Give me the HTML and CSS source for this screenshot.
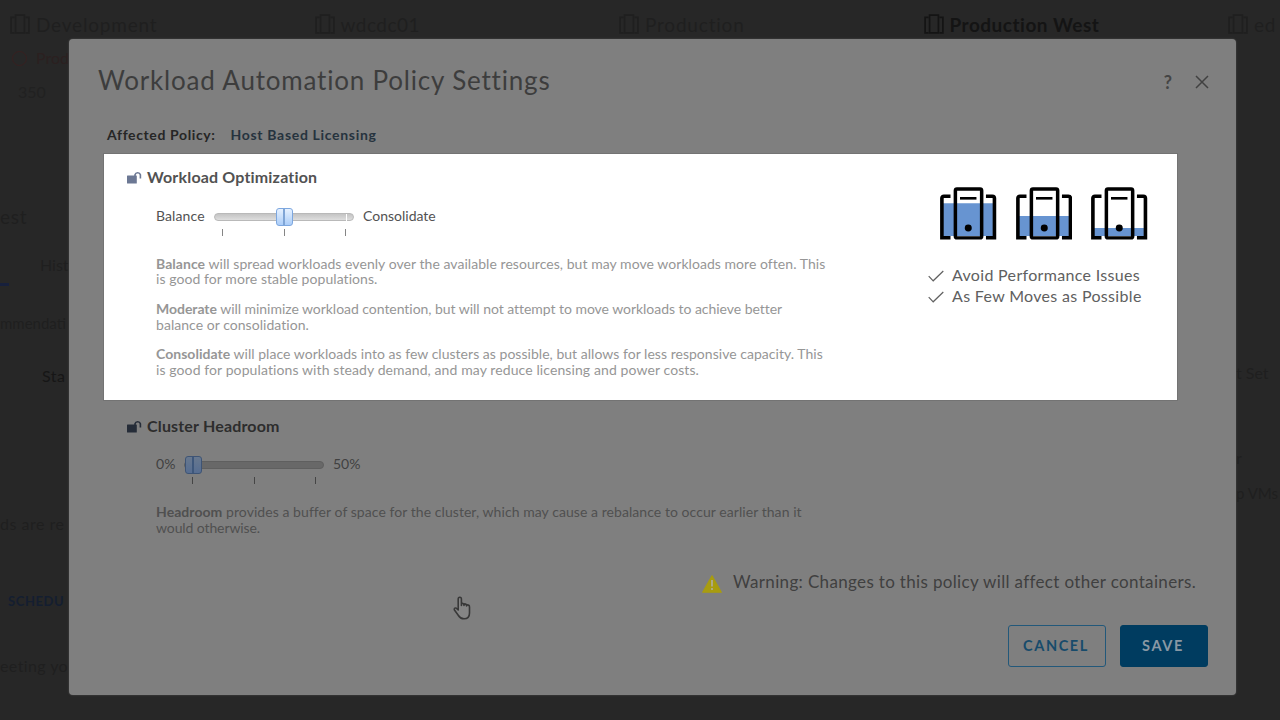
FILE: index.html
```html
<!DOCTYPE html>
<html lang="en">
<head>
<meta charset="utf-8">
<title>Workload Automation Policy Settings</title>
<link rel="stylesheet" href="styles.css">
</head>
<body>
<svg width="0" height="0" class="defs">
  <symbol id="server" viewBox="0 0 57 53">
    <path d="M10.5 9.2H4Q1.9 9.2 1.9 11.3V50.7H10.5M46 9.2H52.4Q54.5 9.2 54.5 11.3V50.7H46" fill="none" stroke="currentColor" stroke-width="3.6"/>
    <rect x="15.4" y="1.9" width="26.3" height="49" rx="1.6" fill="none" stroke="currentColor" stroke-width="3.5"/>
    <path d="M20 11.3H36.5" stroke="currentColor" stroke-width="2.6"/>
    <circle cx="28.3" cy="41" r="3.5" fill="currentColor"/>
  </symbol>
  <symbol id="unlock" viewBox="0 0 15 13">
    <rect x="0" y="4.6" width="9.8" height="8" rx=".5" fill="currentColor"/>
    <path d="M8 5.5V3.8A2.8 2.8 0 0 1 13.4 3.8V7.6" fill="none" stroke="currentColor" stroke-width="1.6"/>
  </symbol>
  <symbol id="check" viewBox="0 0 16 12">
    <path d="M.7 6.2L5.2 10.8L15.3 1" fill="none" stroke="currentColor" stroke-width="1.2"/>
  </symbol>
  <symbol id="cluster" viewBox="0 0 18 18">
    <path d="M4 3H1V17H4M14 3H17V17H14M5 1H13V17H5Z" fill="none" stroke="currentColor" stroke-width="1.5"/>
  </symbol>
</svg>

<div class="page">
  <div class="tabs">
    <div class="tab"><svg class="tab-icon"><use href="#cluster"/></svg><span>Development</span></div>
    <div class="tab"><svg class="tab-icon"><use href="#cluster"/></svg><span class="tight">wdcdc01</span></div>
    <div class="tab"><svg class="tab-icon"><use href="#cluster"/></svg><span>Production</span></div>
    <div class="tab active"><svg class="tab-icon"><use href="#cluster"/></svg><span>Production West</span></div>
    <div class="tab"><svg class="tab-icon"><use href="#cluster"/></svg><span>ed</span></div>
  </div>
  <div class="behind">
    <div class="side">
      <div class="row alert"><i class="ring"></i>Prod</div>
      <div class="row meta">350</div>
      <div class="row crumb">est</div>
      <div class="row history">Hist</div>
      <div class="marker"></div>
      <div class="row recommend">mmendati</div>
      <div class="row status">Sta</div>
      <div class="row loads">ds are re</div>
      <div class="row schedule">SCHEDU</div>
      <div class="row meeting">eeting yo</div>
    </div>
    <div class="side right">
      <div class="row set">t Set</div>
      <div class="row letter">r</div>
      <div class="row vms">p VMs</div>
    </div>
  </div>
</div>

<main class="modal">
  <header class="head">
    <h1 class="title">Workload Automation Policy Settings</h1>
    <div class="tools">
      <span class="help">?</span>
      <svg class="close" viewBox="0 0 14 14"><path d="M1 1L13 13M13 1L1 13" fill="none" stroke="currentColor" stroke-width="1.5"/></svg>
    </div>
  </header>
  <div class="affected"><span>Affected Policy:</span><a class="policy">Host Based Licensing</a></div>

  <section class="panel">
    <div class="settings">
      <h2 class="section-title"><svg class="lock"><use href="#unlock"/></svg><span>Workload Optimization</span></h2>
      <div class="control">
        <span class="min">Balance</span>
        <div class="slider">
          <div class="track mid"><i class="thumb"></i><i class="notch"></i></div>
          <div class="ticks"><i></i><i></i><i></i></div>
        </div>
        <span class="max">Consolidate</span>
      </div>
      <div class="copy">
        <p><span class="l1"><b>Balance</b> will spread workloads evenly over the available resources, but may move workloads more often. This</span><br><span class="l2">is good for more stable populations.</span></p>
        <p><span class="l3"><b>Moderate</b> will minimize workload contention, but will not attempt to move workloads to achieve better</span><br><span class="l4">balance or consolidation.</span></p>
        <p><span class="l5"><b>Consolidate</b> will place workloads into as few clusters as possible, but allows for less responsive capacity. This</span><br><span class="l6">is good for populations with steady demand, and may reduce licensing and power costs.</span></p>
      </div>
    </div>
    <aside class="summary">
      <div class="servers">
        <svg class="server" viewBox="0 0 57 53"><path class="load" d="M3 16.3H53V49H3Z"/><use href="#server"/></svg>
        <svg class="server" viewBox="0 0 57 53"><path class="load" d="M3 29H53V49H3Z"/><use href="#server"/></svg>
        <svg class="server" viewBox="0 0 57 53"><path class="load" d="M3 41H53V49H3Z"/><use href="#server"/></svg>
      </div>
      <div class="goal"><svg class="check"><use href="#check"/></svg><span>Avoid Performance Issues</span></div>
      <div class="goal"><svg class="check"><use href="#check"/></svg><span>As Few Moves as Possible</span></div>
    </aside>
  </section>

  <section class="headroom">
    <h2 class="section-title"><svg class="lock"><use href="#unlock"/></svg><span>Cluster Headroom</span></h2>
    <div class="control">
      <span class="min">0%</span>
      <div class="slider">
        <div class="track"><i class="thumb"></i></div>
        <div class="ticks"><i></i><i></i><i></i></div>
      </div>
      <span class="max">50%</span>
    </div>
    <div class="copy">
      <p><span class="l7"><b>Headroom</b> provides a buffer of space for the cluster, which may cause a rebalance to occur earlier than it</span><br><span class="l8">would otherwise.</span></p>
    </div>
  </section>

  <div class="warning">
    <svg class="warn-icon" viewBox="0 0 20 18"><path d="M10 .8L19.3 17.2H.7Z" fill="#a89c10" stroke="#a89c10" stroke-width="1.2" stroke-linejoin="round"/><path d="M10 5V11.5M10 13V15" stroke="#aeab93" stroke-width="1.8"/></svg>
    <span>Warning: Changes to this policy will affect other containers.</span>
  </div>
  <footer class="actions">
    <button class="btn cancel">CANCEL</button>
    <button class="btn save">SAVE</button>
  </footer>
</main>

<svg class="pointer" viewBox="0 0 18 24"><path d="M5.2 14V3.2Q5.2 1.3 6.8 1.3T8.4 3.2V9.5V7.5Q10.9 6.8 11 9.5V8Q13.5 7.5 13.6 10V9Q16.5 8.5 16.5 11V17Q16.5 22.8 11 22.8Q7.3 22.8 5.4 19.5L1.3 13.7Q1 11.7 3 12Z" fill="#858585" stroke="#383838" stroke-width="1.6" stroke-linejoin="round"/></svg>
</body>
</html>
```

FILE: styles.css
```css
* { box-sizing: border-box; }
body {
  margin: 0;
  width: 1280px;
  height: 720px;
  overflow: hidden;
  background: #272727;
  font-family: Lato, "Open Sans", sans-serif;
  white-space: nowrap;
}
.defs { position: absolute; }
h1, h2, p { margin: 0; }
i { display: block; }

.page { height: 720px; color: #1f1f1f; }
.tabs { height: 48px; padding: 12px 0 0 10px; display: flex; overflow: hidden; }
.tab { flex: 0 0 304.5px; height: 24px; display: flex; align-items: center; gap: 6px; font-size: 19px; letter-spacing: .8px; }
.tab-icon { width: 20px; height: 20px; }
.tab.active { color: #141414; font-weight: 700; letter-spacing: .5px; }
.tight { letter-spacing: .5px; }
.behind { display: flex; justify-content: space-between; }
.side { width: 69px; overflow: hidden; font-size: 16px; }
.side.right { width: 44px; padding-top: 315px; }
.row { height: 20px; line-height: 20px; }
.alert { display: flex; align-items: center; gap: 9px; padding-left: 12px; color: #2b2020; }
.ring { flex: none; width: 15px; height: 15px; border: 1px solid #382020; border-radius: 50%; }
.meta { margin-top: 14px; padding-left: 18px; color: #212121; }
.crumb { margin-top: 105px; font-size: 19px; letter-spacing: .7px; }
.history { margin-top: 28px; padding-left: 40px; }
.marker { width: 9px; height: 3px; margin-top: 8px; background: #17203c; }
.recommend { margin-top: 27px; font-size: 15px; }
.status { margin-top: 33px; padding-left: 42px; color: #161616; letter-spacing: .5px; }
.loads { margin-top: 128px; letter-spacing: .5px; }
.schedule { margin-top: 57px; padding-left: 8px; font-size: 13px; font-weight: 700; letter-spacing: .6px; color: #141e30; }
.meeting { margin-top: 45px; letter-spacing: .4px; }
.letter { margin-top: 65px; }
.vms { margin-top: 15px; font-size: 15px; }

.modal {
  position: absolute;
  left: 69px;
  top: 39px;
  width: 1167px;
  height: 656px;
  background: #7f7f7f;
  border-radius: 4px;
  box-shadow: 0 0 2px #555;
  color: #383838;
  display: flex;
  flex-direction: column;
}
.head { height: 84px; padding: 0 27px 0 29px; display: flex; align-items: center; justify-content: space-between; }
.title { font-size: 26px; font-weight: 400; letter-spacing: .81px; padding-bottom: 2px; color: #3d3d3d; }
.tools { display: flex; align-items: center; gap: 23px; padding-top: 2px; }
.help { font-size: 18px; font-weight: 700; line-height: 20px; color: #454545; }
.close { width: 14px; height: 14px; color: #414141; }
.affected { height: 31px; padding: 2px 0 0 38px; display: flex; gap: 15px; font-size: 14px; line-height: 20px; font-weight: 700; letter-spacing: .62px; color: #262626; }
.policy { color: #26333e; letter-spacing: .68px; }

.panel {
  height: 246px;
  width: 1073px;
  margin-left: 35px;
  background: #fff;
  box-shadow: 0 0 0 1px #737373;
  color: #525252;
  display: flex;
}
.settings { width: 824px; padding: 12px 0 0 23px; }
.section-title { display: flex; align-items: center; gap: 5px; height: 22px; font-size: 16px; line-height: 22px; font-weight: 700; letter-spacing: .17px; }
.section-title span { padding-bottom: 1px; }
.lock { width: 15px; height: 13px; color: #6c7894; }
.control { display: flex; height: 32px; margin: 18px 0 0 29px; font-size: 14px; line-height: 20px; }
.min { width: 58px; letter-spacing: .1px; }
.max { margin-left: 9px; letter-spacing: 0; }
.slider { width: 140px; padding-top: 7px; }
.track { height: 8px; border: 1px solid #b9b9b9; border-radius: 4px; background: linear-gradient(#c4c4c4, #dedede); display: flex; align-items: center; }
.thumb {
  flex: none;
  width: 17px;
  height: 18px;
  border: 1px solid #7da7df;
  border-radius: 3px;
  background: linear-gradient(90deg, transparent 6px, #7fa5d6 6px, #7fa5d6 8px, transparent 8px), linear-gradient(#e6f1ff, #abcdf8);
}
.mid { padding-left: 61px; }
.notch { width: 1px; height: 7px; margin-left: 53px; background: #fff; }
.ticks { display: flex; justify-content: space-between; padding: 8px 8px 0; }
.ticks i { width: 1px; height: 7px; background: #858585; }
.copy { margin: 17.5px 0 0 29px; font-size: 14px; line-height: 15.7px; color: #969696; }
.copy p + p { margin-top: 14px; }
.l1 { letter-spacing: .05px; }
.l2 { letter-spacing: .07px; }
.l3 { letter-spacing: -.04px; }
.l4 { letter-spacing: .04px; }
.l5 { letter-spacing: .03px; }
.l6 { letter-spacing: .1px; }
.l7 { letter-spacing: .06px; }
.l8 { letter-spacing: -.1px; }
.summary { width: 220px; padding-top: 33px; }
.servers { display: flex; gap: 18.6px; padding-left: 12px; height: 77px; }
.server { width: 57px; height: 53px; color: #000; }
.load { fill: #6794d1; }
.goal { display: flex; align-items: center; gap: 8px; height: 20.7px; font-size: 16px; letter-spacing: .32px; color: #606060; }
.check { width: 16px; height: 12px; margin-top: 3px; }

.headroom { height: 148px; padding: 15px 0 0 58px; color: #2d2d2d; }
.headroom .lock { color: #252c38; }
.headroom .control { margin-top: 17px; color: #414141; }
.headroom .min { width: 28px; }
.headroom .track { border-color: #5f5f5f; background: #686868; }
.headroom .thumb { border-color: #3e5475; background: linear-gradient(90deg, transparent 6px, #3e577b 6px, #3e577b 8px, transparent 8px), linear-gradient(#68788e, #566d91); }
.headroom .ticks i { background: #454545; }
.headroom .copy { color: #505050; margin-top: 18px; }

.warning { height: 68px; padding: 22px 40px 0 0; display: flex; justify-content: flex-end; gap: 11px; font-size: 17px; letter-spacing: .34px; line-height: 24px; color: #404040; }
.warn-icon { width: 20px; height: 18px; margin-top: 5px; }
.actions { display: flex; justify-content: flex-end; gap: 14px; padding: 9px 28px 0 0; }
.btn { height: 42px; border: 1px solid #003c5f; border-radius: 3px; padding: 0 2px 2px 0; font: 700 14.5px Lato, sans-serif; letter-spacing: 1.6px; }
.cancel { width: 98px; background: transparent; color: #174b6b; border-color: #22587a; }
.save { width: 88px; background: #003c60; color: #8998a4; }
.pointer { position: absolute; left: 453px; top: 596px; width: 18px; height: 24px; }
```
